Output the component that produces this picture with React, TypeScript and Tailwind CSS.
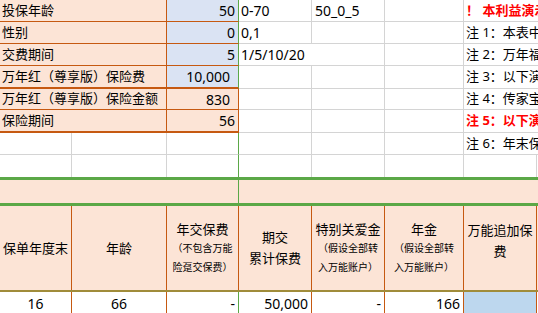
import React from "react";

// column widths: A B C D E F G H
const W = {
  a: "w-[72px]",
  b: "w-[95px]",
  ab: "w-[167px]",
  c: "w-[72px]",
  d: "w-[73px]",
  e: "w-[73px]",
  f: "w-[79px]",
  g: "w-[73px]",
};

interface TopRow {
  label: string;
  value: string;
  blue: boolean;
  d?: string;
  e?: string;
  note?: string;
  red?: boolean;
  h: string;
  bottom: string;
  valuePad?: string;
  dOverflow?: boolean;
}

const topRows: TopRow[] = [
  { label: "投保年龄", value: "50", blue: true, d: "0-70", e: "50_0_5", note: "！ 本利益演示仅供参考", red: true, h: "h-[22px]", bottom: "border-b border-b-[#c65911]" },
  { label: "性别", value: "0", blue: true, d: "0,1", note: "注 1：本表中所列数据", h: "h-[22px]", bottom: "border-b border-b-[#c65911]" },
  { label: "交费期间", value: "5", blue: true, d: "1/5/10/20", dOverflow: true, note: "注 2：万年福", h: "h-[22px]", bottom: "border-b border-b-[#c65911]" },
  { label: "万年红（尊享版）保险费", value: "10,000", blue: true, valuePad: "pr-[8px]", note: "注 3：以下演示", h: "h-[23px]", bottom: "border-b-2 border-b-[#c65911]" },
  { label: "万年红（尊享版）保险金额", value: "830", blue: false, valuePad: "pr-[8px]", note: "注 4：传家宝", h: "h-[21px]", bottom: "border-b border-b-[#c65911]" },
  { label: "保险期间", value: "56", blue: false, note: "注 5：以下演示", red: true, h: "h-[23px]", bottom: "border-b-2 border-b-[#c65911]" },
];

const grid = "border-r border-b border-[#d4d4d4]";
const num = "text-[14px]";

function Header() {
  const cell = "flex flex-col items-center justify-center border-r border-r-[#c65911] text-center";
  const main = "text-[13px] leading-[20px]";
  const sub = "text-[10px] leading-[19px]";
  return (
    <div className="flex h-[86px] bg-[#fce4d6] border-b-2 border-b-[#a08c3a]">
      <div className={`${W.a} ${cell}`}>
        <span className={main}>保单年度末</span>
      </div>
      <div className={`${W.b} ${cell}`}>
        <span className={main}>年龄</span>
      </div>
      <div className={`${W.c} ${cell} border-r-[#5ba847]`}>
        <span className={main}>年交保费</span>
        <span className={sub}>（不包含万能</span>
        <span className={sub}>险趸交保费）</span>
      </div>
      <div className={`${W.d} ${cell}`}>
        <span className="text-[13px] leading-[21px]">期交</span>
        <span className="text-[13px] leading-[21px]">累计保费</span>
      </div>
      <div className={`${W.e} ${cell}`}>
        <span className={main}>特别关爱金</span>
        <span className={sub}>（假设全部转</span>
        <span className={sub}>入万能账户）</span>
      </div>
      <div className={`${W.f} ${cell}`}>
        <span className={main}>年金</span>
        <span className={sub}>（假设全部转</span>
        <span className={sub}>入万能账户）</span>
      </div>
      <div className={`${W.g} ${cell} justify-start pt-[14px]`}>
        <span className="text-[13px] leading-[21px]">万能追加保</span>
        <span className="text-[13px] leading-[21px]">费</span>
      </div>
      <div className="flex-1" />
    </div>
  );
}

export default function App() {
  return (
    <div
      className="w-[538px] h-[313px] overflow-hidden bg-white text-black text-[13px]"
      style={{ fontFamily: '"Noto Sans", "Noto Sans CJK SC", sans-serif' }}
    >
      {topRows.map((r, i) => (
        <div key={i} className={`flex ${r.h}`}>
          <div className={`${W.ab} ${r.bottom} border-r border-r-[#c65911] bg-[#fce4d6] flex items-center pl-[2px] whitespace-nowrap`}>
            {r.label}
          </div>
          <div
            className={`${W.c} ${r.bottom} ${num} border-r ${i < 4 ? "border-r-[#5ba847] bg-[#dae3f3]" : "border-r-[#c65911] bg-[#fce4d6]"} flex items-center justify-end ${r.valuePad ?? "pr-[3px]"}`}
          >
            {r.value}
          </div>
          <div className={`${W.d} ${num} border-b border-[#d4d4d4] ${r.dOverflow ? "" : "border-r"} flex items-center pl-[2px] whitespace-nowrap overflow-visible`}>
            {r.d}
          </div>
          <div className={`${W.e} ${num} ${grid} flex items-center pl-[3px] whitespace-nowrap`}>{r.e}</div>
          <div className={`${W.f} ${grid}`} />
          <div
            className={`${W.g} border-b border-[#d4d4d4] flex items-center pl-[2px] whitespace-nowrap overflow-visible ${r.red ? "text-[#ff0000] font-bold" : ""}`}
          >
            {r.note}
          </div>
          <div className="flex-1 border-b border-[#d4d4d4]" />
        </div>
      ))}

      {/* two empty rows */}
      <div className="flex h-[22px]">
        <div className={`${W.a} ${grid}`} />
        <div className={`${W.b} ${grid}`} />
        <div className={`${W.c} border-b border-[#d4d4d4] border-r border-r-[#5ba847]`} />
        <div className={`${W.d} ${grid}`} />
        <div className={`${W.e} ${grid}`} />
        <div className={`${W.f} ${grid}`} />
        <div className={`${W.g} border-b border-[#d4d4d4] flex items-center pl-[2px] whitespace-nowrap overflow-visible`}>
          注 6：年末保单
        </div>
        <div className="flex-1 border-b border-[#d4d4d4]" />
      </div>
      <div className="flex h-[22px]">
        <div className={`${W.a} border-r border-[#d4d4d4]`} />
        <div className={`${W.b} border-r border-[#d4d4d4]`} />
        <div className={`${W.c} border-r border-r-[#5ba847]`} />
        <div className={`${W.d} border-r border-[#d4d4d4]`} />
        <div className={`${W.e} border-r border-[#d4d4d4]`} />
        <div className={`${W.f} border-r border-[#d4d4d4]`} />
        <div className={`${W.g} border-r border-[#d4d4d4]`} />
        <div className="flex-1" />
      </div>

      {/* green band */}
      <div className="flex h-[29px] bg-[#fce4d6] border-y-[3px] border-[#5ba847]">
        <div className="w-[239px] border-r border-r-[#5ba847]" />
        <div className="flex-1" />
      </div>

      <Header />

      {/* first data row */}
      <div className={`flex h-[22px] ${num}`}>
        <div className={`${W.a} border-r border-r-[#c65911] flex items-center justify-center`}>16</div>
        <div className={`${W.b} border-r border-r-[#c65911] flex items-center justify-center`}>66</div>
        <div className={`${W.c} border-r border-r-[#5ba847] flex items-center justify-end pr-[3px]`}>-</div>
        <div className={`${W.d} border-r border-r-[#c65911] flex items-center justify-end pr-[3px]`}>50,000</div>
        <div className={`${W.e} border-r border-r-[#c65911] flex items-center justify-end pr-[3px]`}>-</div>
        <div className={`${W.f} border-r border-r-[#c65911] flex items-center justify-end pr-[3px]`}>166</div>
        <div className={`${W.g} border-r border-r-[#c65911] bg-[#bdd7ee]`} />
        <div className="flex-1" />
      </div>
    </div>
  );
}
